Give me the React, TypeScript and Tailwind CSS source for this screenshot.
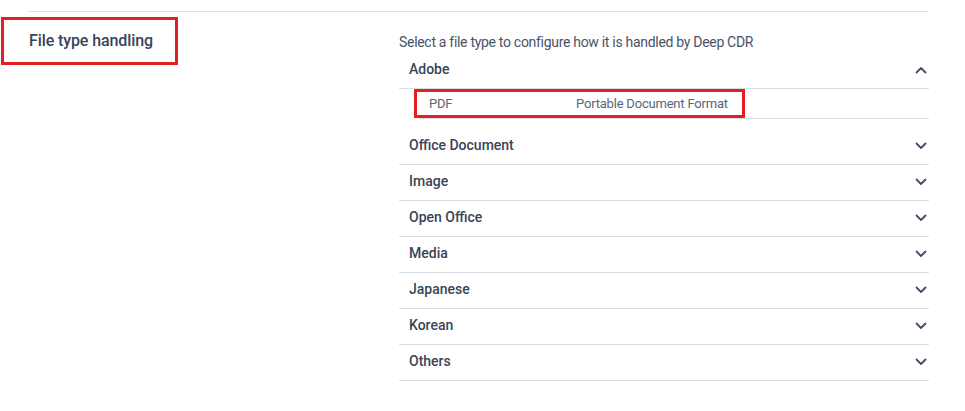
import React from "react";

const groups = ["Office Document", "Image", "Open Office", "Media", "Japanese", "Korean", "Others"];

function Chevron({ up }: { up?: boolean }) {
  return (
    <svg width="12" height="8" viewBox="0 0 12 8" className="text-[#454f63]">
      <polyline
        points={up ? "1.5,6.5 6,2 10.5,6.5" : "1.5,1.5 6,6 10.5,1.5"}
        fill="none"
        stroke="currentColor"
        strokeWidth="1.8"
        strokeLinecap="round"
        strokeLinejoin="round"
      />
    </svg>
  );
}

function Row({ label, up }: { label: string; up?: boolean }) {
  return (
    <div className="flex h-[36px] items-center justify-between border-b border-[#d8dde7] pl-[10px] pr-[2px] pb-[2px]">
      <span className="text-[14px] font-medium text-[#3a4458]">{label}</span>
      <Chevron up={up} />
    </div>
  );
}

export default function App() {
  return (
    <div className="relative h-[411px] w-[965px] overflow-hidden bg-white font-['Roboto',sans-serif]">
      <div className="ml-[29px] w-[900px] pt-[11px]">
        <div className="h-px bg-[#dde1e8]" />
        <div className="flex">
          <div className="w-[370px] pt-[18px]">
            <h2 className="text-[16px] font-medium leading-[22px] tracking-[-0.1px] text-[#3a4458]">File type handling</h2>
          </div>
          <div className="flex-1 pt-[20px]">
            <p className="mb-[1px] text-[14px] leading-[20px] tracking-[-0.3px] text-[#4a5366]">
              Select a file type to configure how it is handled by Deep CDR
            </p>
            <Row label="Adobe" up />
            <div className="pb-[10px]">
              <div className="ml-[20px] flex h-[30px] items-center border-b border-[#d8dde7] pl-[10px] text-[13px] tracking-[-0.2px] text-[#5b6478]">
                <span className="w-[147px]">PDF</span>
                <span>Portable Document Format</span>
              </div>
            </div>
            {groups.map((g) => (
              <Row key={g} label={g} />
            ))}
          </div>
        </div>
      </div>
      <div className="pointer-events-none absolute left-[1px] top-[17px] h-[48px] w-[177px] border-[3px] border-[#e31e24]" />
      <div className="pointer-events-none absolute left-[414px] top-[89px] h-[29px] w-[331px] border-[3px] border-[#e31e24]" />
    </div>
  );
}
